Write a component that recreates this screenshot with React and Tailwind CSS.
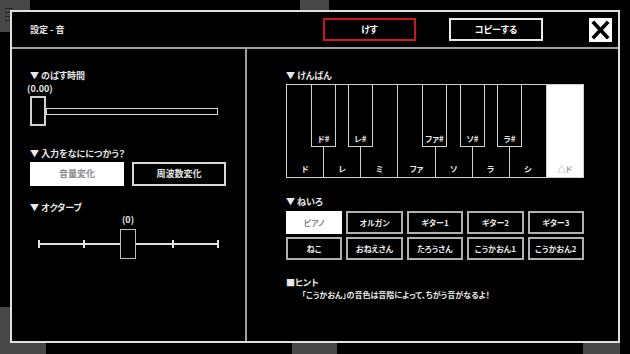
import React from "react";

const whiteKeys = ["ド", "レ", "ミ", "ファ", "ソ", "ラ", "シ", "△ド"];
const blackKeys = [
  { label: "ド#", left: 25 },
  { label: "レ#", left: 62 },
  { label: "ファ#", left: 136 },
  { label: "ソ#", left: 174 },
  { label: "ラ#", left: 211 },
];
const tones = ["ピアノ", "オルガン", "ギター1", "ギター2", "ギター3", "ねこ", "おねえさん", "たろうさん", "こうかおん1", "こうかおん2"];

function Label({ children, className = "" }) {
  return <div className={"text-[9px] leading-[12px] font-bold text-[#e8e8e8] " + className}>{children}</div>;
}

export default function App() {
  return (
    <div className="relative w-[630px] h-[354px] overflow-hidden bg-black font-['Noto_Sans_CJK_JP','Noto_Sans',sans-serif] [font-feature-settings:'palt']">
      {/* background screen */}
      <div className="flex flex-col justify-between h-full">
        <div className="flex items-start">
          <div className="w-[30px] h-[32px] bg-[#474747] flex flex-col gap-[3px] pt-[8px] pl-[5px]">
            <div className="w-[8px] h-[1px] bg-[#222]" />
            <div className="w-[8px] h-[1px] bg-[#222]" />
            <div className="w-[8px] h-[1px] bg-[#222]" />
            <div className="w-[8px] h-[1px] bg-[#222]" />
          </div>
          <div className="ml-[270px] w-[29px] h-[30px] bg-[#474747]" />
        </div>
        <div className="flex items-end">
          <div className="w-[46px] h-[47px] bg-[#474747]" />
          <div className="ml-[246px] w-[45px] h-[47px] bg-[#474747]" />
          <div className="ml-[246px] w-[37px] h-[47px] bg-[#474747]" />
        </div>
      </div>

      {/* modal */}
      <div className="absolute left-[10px] top-[10px] w-[610px] h-[333px] border-2 border-[#e0e0e0] bg-black flex flex-col">
        {/* header */}
        <div className="h-[37px] border-b-2 border-[#a0a0a0] flex items-center pl-[18px]">
          <div className="flex-1 text-[9px] font-bold text-[#e8e8e8]">設定 - 音</div>
          <button className="w-[93px] h-[23px] border-2 border-[#d0161b] text-[9px] font-bold text-white flex items-center justify-center">けす</button>
          <button className="ml-[33px] w-[94px] h-[23px] border-2 border-[#e8e8e8] text-[9px] font-bold text-white flex items-center justify-center">コピーする</button>
          <button className="ml-[46px] mr-[6px] w-[23px] h-[24px] bg-white flex items-center justify-center">
            <svg width="23" height="24" viewBox="0 0 23 24">
              <path d="M5 5 L18 19 M18 5 L5 19" stroke="#000" strokeWidth="3.6" strokeLinecap="square" />
            </svg>
          </button>
        </div>

        {/* body */}
        <div className="flex flex-1">
          {/* left panel */}
          <div className="w-[235px] border-r-2 border-[#a0a0a0] pl-[18px] pt-[21px] flex flex-col">
            <Label>▼ のばす時間</Label>
            <Label className="-ml-[3px] mt-[1px]">(0.00)</Label>
            <div className="mt-[1px] flex items-center">
              <div className="w-[16px] h-[30px] border-2 border-[#d0d0d0] bg-black" />
              <div className="w-[172px] h-[7px] border-[1.5px] border-[#d8d8d8]" />
            </div>
            <Label className="mt-[22px]">▼ 入力をなににつかう？</Label>
            <div className="mt-[2px] flex gap-[8px]">
              <div className="w-[94px] h-[24px] bg-white flex items-center justify-center text-[9px] font-bold text-[#8a8a8a]">音量変化</div>
              <div className="w-[94px] h-[24px] border-2 border-[#d8d8d8] flex items-center justify-center text-[9px] font-bold text-[#e8e8e8]">周波数変化</div>
            </div>
            <Label className="mt-[16px]">▼ オクターブ</Label>
            <Label className="ml-[90px] w-[16px] text-center">(0)</Label>
            <div className="mt-[3px] ml-[8px] relative w-[181px] h-[30px]">
              <div className="absolute left-0 right-0 top-[14px] h-[2px] bg-[#e0e0e0]" />
              <div className="absolute inset-x-0 top-[11px] h-[8px] flex justify-between">
                <div className="w-[2px] h-full bg-[#e0e0e0]" />
                <div className="w-[2px] h-full bg-[#e0e0e0]" />
                <div className="w-[2px] h-full bg-[#e0e0e0]" />
                <div className="w-[2px] h-full bg-[#e0e0e0]" />
                <div className="w-[2px] h-full bg-[#e0e0e0]" />
              </div>
              <div className="absolute left-[82px] top-0 w-[16px] h-[30px] border-[1.5px] border-[#bdbdbd] bg-black" />
            </div>
          </div>

          {/* right panel */}
          <div className="flex-1 pl-[39px] pt-[21px] flex flex-col">
            <Label>▼ けんばん</Label>
            <div className="mt-[2px] relative w-[298px] h-[94px] border border-[#d0d0d0] flex">
              {whiteKeys.map((k, i) => (
                <div
                  key={k}
                  className={
                    "flex-1 flex items-end justify-center pb-[2px] text-[8px] font-bold " +
                    (i === 7 ? "bg-white text-[#9a9a9a]" : "border-r border-[#d0d0d0] text-[#e8e8e8]")
                  }
                >
                  {k}
                </div>
              ))}
              {blackKeys.map((b) => (
                <div
                  key={b.label}
                  className="absolute top-[-1px] w-[25px] h-[63px] bg-black border-[1.5px] border-[#cfcfcf] flex items-end justify-center pb-[1px] text-[8px] font-bold text-[#e8e8e8]"
                  style={{ left: b.left - 1 }}
                >
                  {b.label}
                </div>
              ))}
            </div>
            <Label className="mt-[18px]">▼ ねいろ</Label>
            <div className="mt-[3px] w-[298px] grid grid-cols-5 gap-x-[4px] gap-y-[3px]">
              {tones.map((t, i) => (
                <div
                  key={t}
                  className={
                    "h-[23px] flex items-center justify-center text-[8px] font-bold border-2 " +
                    (i === 0 ? "bg-white border-white text-[#8a8a8a]" : "border-[#b0b0b0] text-[#e8e8e8]")
                  }
                >
                  {t}
                </div>
              ))}
            </div>
            <Label className="mt-[17px] leading-[11px]">■ヒント</Label>
            <div className="pl-[16px] text-[8px] leading-[11px] font-bold text-[#e8e8e8]">
              「こうかおん」の音色は音階によって、ちがう音がなるよ！
            </div>
          </div>
        </div>
      </div>
    </div>
  );
}
